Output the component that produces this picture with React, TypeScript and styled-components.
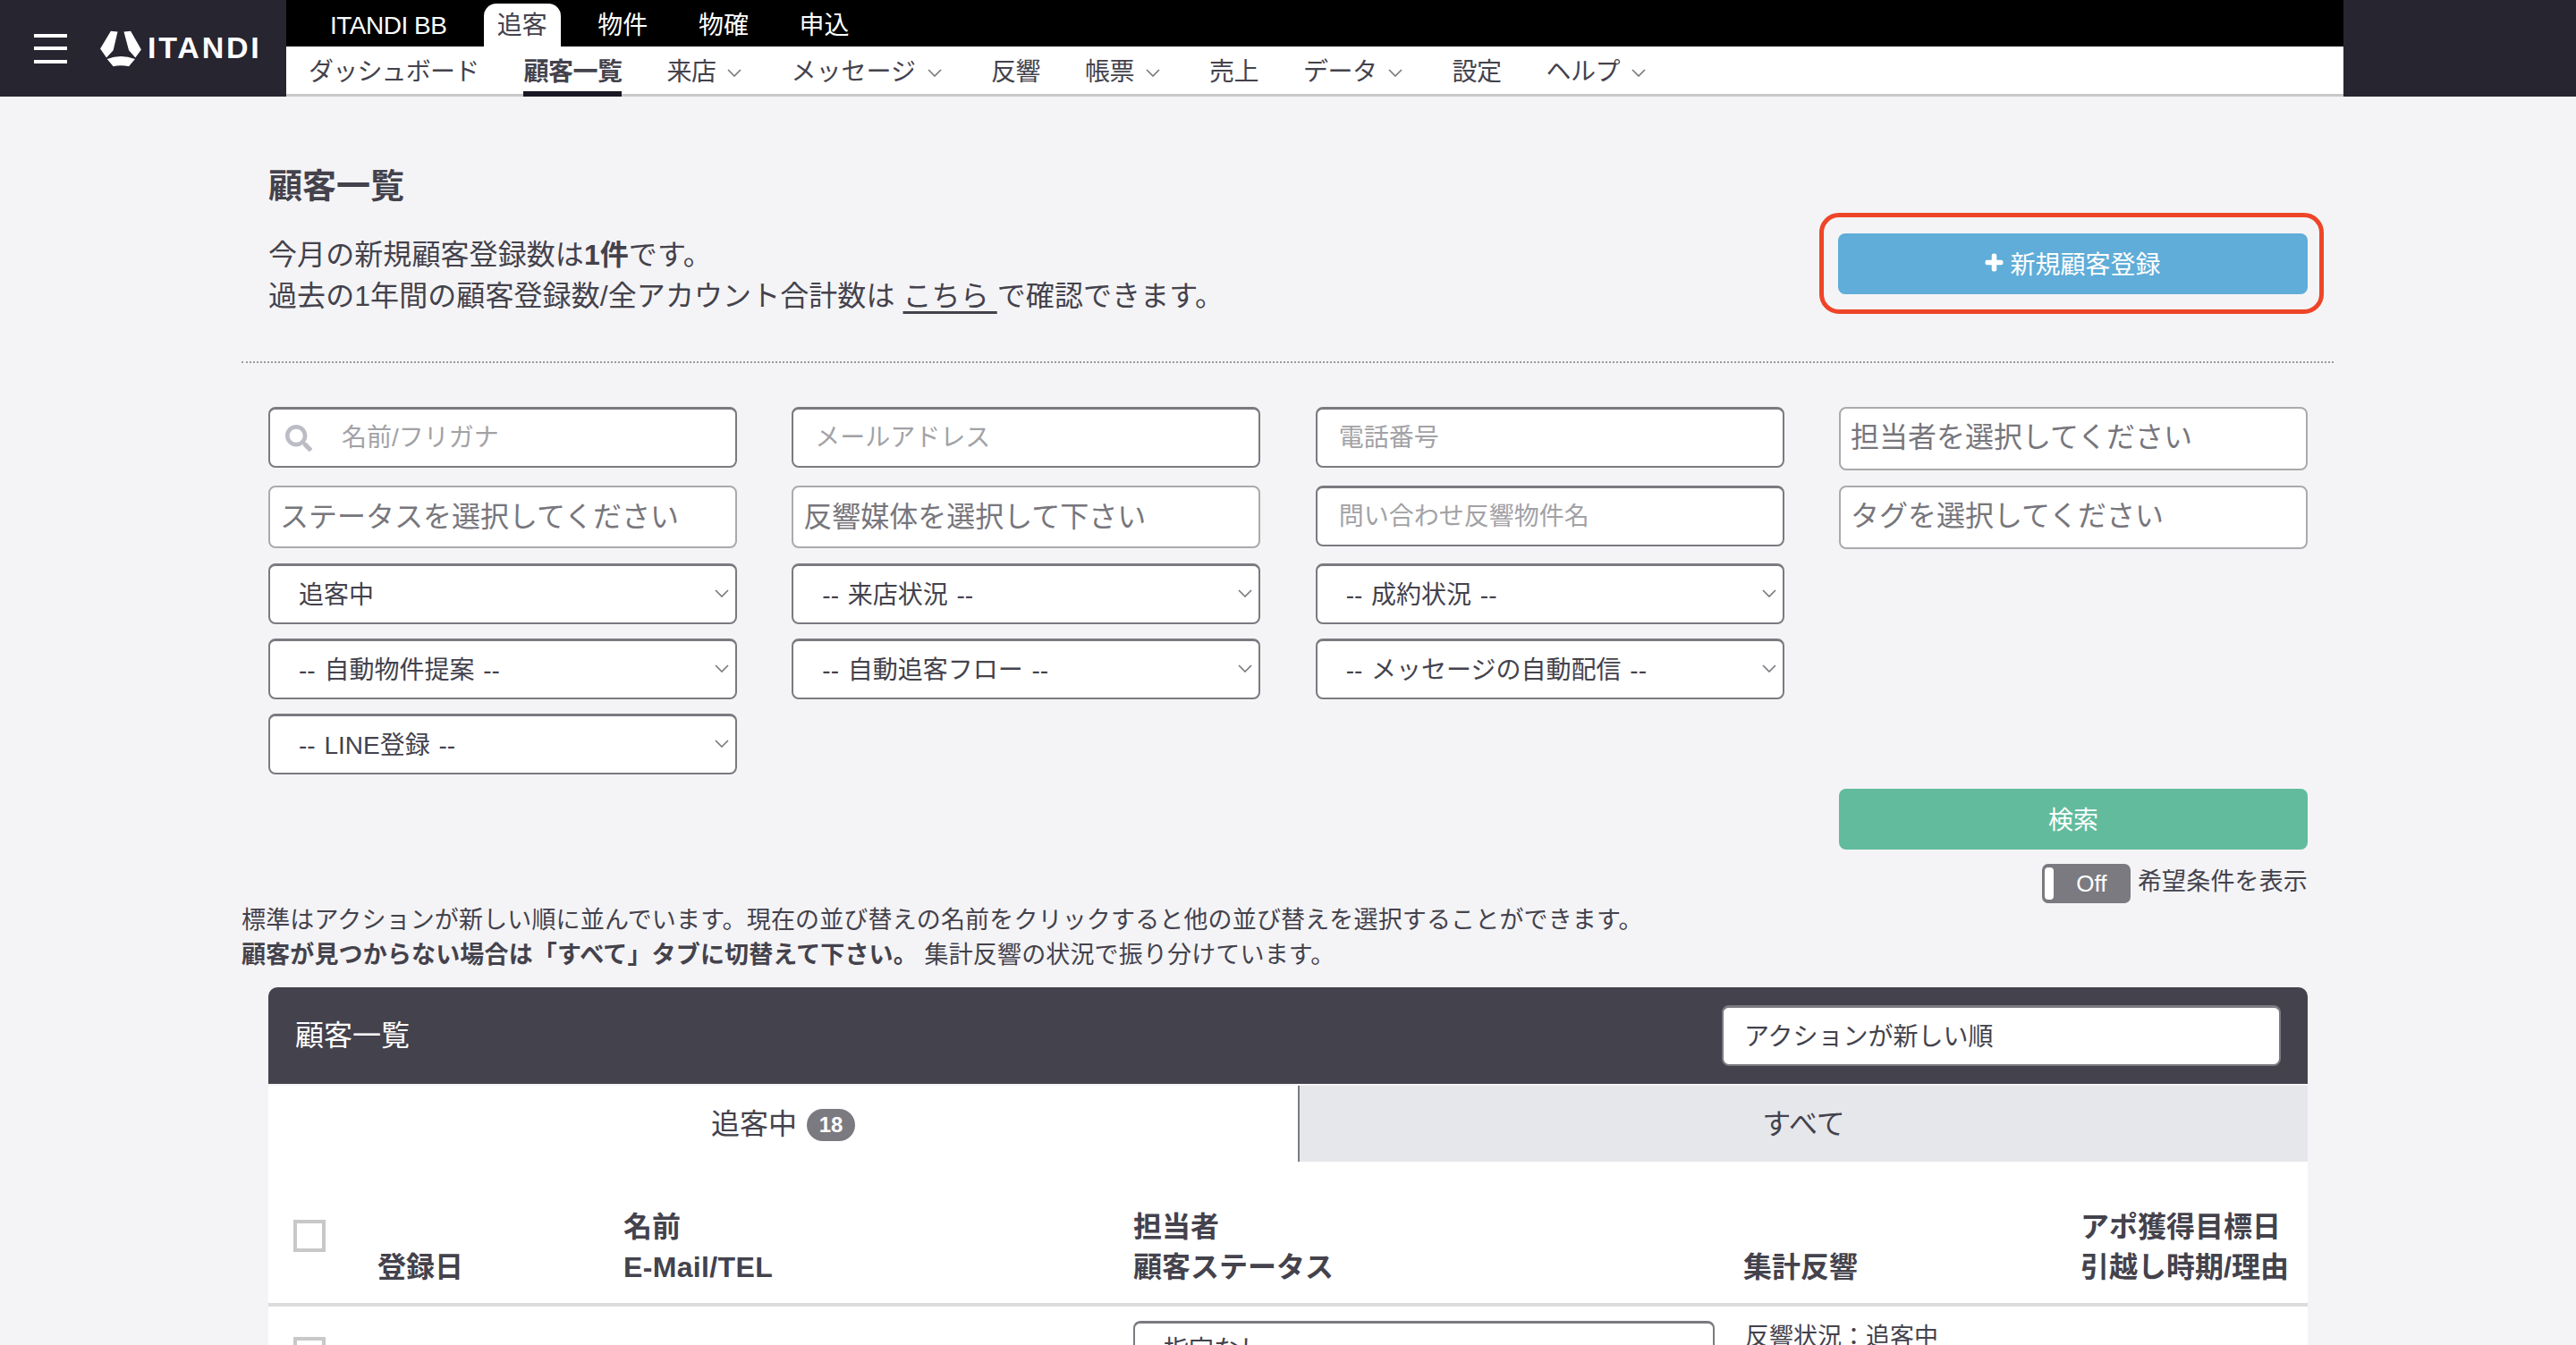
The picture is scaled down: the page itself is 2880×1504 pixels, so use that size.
import React from "react";
import styled, { createGlobalStyle } from "styled-components";
import { FaPlus, FaSearch } from "react-icons/fa";

const GlobalStyle = createGlobalStyle`
  html, body { margin: 0; padding: 0; height: 1504px; overflow: hidden; background: #f4f4f6; }
  body { font-family: "Liberation Sans", "Noto Sans CJK JP", sans-serif; color: #44424c; }
  * { box-sizing: border-box; }
  input, select { font-family: inherit; }
`;

const Page = styled.div`
  width: 2880px;
  height: 1504px;
  overflow: hidden;
`;

/* ---------- header ---------- */
const Header = styled.header`
  display: flex;
  height: 108px;
  background: #262530;
`;
const Brand = styled.div`
  width: 320px;
  flex: none;
  display: flex;
  align-items: center;
  padding-left: 38px;
`;
const Burger = styled.div`
  width: 37px;
  height: 33px;
  display: flex;
  flex-direction: column;
  justify-content: space-between;
  margin-right: 36px;
  span { display: block; height: 4px; background: #fff; }
`;
const LogoMark = styled.svg`
  width: 48px;
  height: 41px;
  flex: none;
  margin-right: 6px;
`;
const LogoText = styled.span`
  color: #fff;
  font-size: 34px;
  font-weight: 700;
  letter-spacing: 2.8px;
  line-height: 1;
  padding-bottom: 3px;
`;
const NavColumn = styled.div`
  width: 2300px;
  flex: none;
  display: flex;
  flex-direction: column;
`;
const TopNav = styled.nav`
  height: 52px;
  background: #000;
  display: flex;
  align-items: flex-end;
  gap: 26.5px;
  padding-left: 34px;
`;
const TopItem = styled.a<{ $active?: boolean }>`
  height: 48px;
  padding: 2px 15px 0;
  display: flex;
  align-items: center;
  font-size: 28px;
  line-height: 1;
  color: ${(p) => (p.$active ? "#44424c" : "#fff")};
  background: ${(p) => (p.$active ? "#fff" : "transparent")};
  border-radius: 14px 14px 0 0;
`;
const BrandTab = styled(TopItem)`
  letter-spacing: -0.5px;
`;
const SubNav = styled.nav`
  height: 56px;
  background: #fff;
  border-bottom: 3px solid #c8c8c8;
  display: flex;
  gap: 50px;
  padding-left: 25px;
`;
const SubItem = styled.a<{ $active?: boolean; $menu?: boolean }>`
  height: 56px;
  display: flex;
  align-items: center;
  font-size: 28px;
  line-height: 1;
  letter-spacing: -0.5px;
  font-weight: ${(p) => (p.$active ? 700 : 400)};
  color: #44424c;
  margin-right: ${(p) => (p.$menu ? "5px" : "0")};
  border-bottom: ${(p) => (p.$active ? "6px solid #1a1824" : "0")};
  padding-top: ${(p) => (p.$active ? "8px" : "2px")};
  svg { margin-left: 13px; }
`;
const DashboardItem = styled(SubItem)`
  letter-spacing: -0.8px;
`;
const MessageItem = styled(SubItem)`
  letter-spacing: 0;
`;

const Chevron = ({ className }: { className?: string }) => (
  <svg className={className} width="16" height="9" viewBox="0 0 16 9" fill="none">
    <path d="M1 1l7 7 7-7" stroke="#77767c" strokeWidth="1.6" />
  </svg>
);

/* ---------- intro ---------- */
const Content = styled.main`
  width: 2339px;
  margin-left: 270px;
`;
const Intro = styled.section`
  display: flex;
  justify-content: space-between;
  align-items: flex-start;
  padding: 77px 11px 50px 30px;
  border-bottom: 2px dotted #9a9a9e;
`;
const Title = styled.h1`
  margin: 0 0 31px;
  font-size: 38px;
  line-height: 46px;
  font-weight: 700;
`;
const Lead = styled.p`
  margin: 0;
  font-size: 32px;
  line-height: 46px;
  letter-spacing: 0.08px;
  a { color: inherit; text-decoration: underline; text-decoration-thickness: 3px; text-underline-offset: 6px; }
`;
const Highlight = styled.div`
  width: 564px;
  height: 113px;
  margin-top: 53px;
  border: 5px solid #ee4528;
  border-radius: 22px;
  display: flex;
  align-items: center;
  justify-content: center;
`;
const AddButton = styled.button`
  width: 525px;
  height: 68px;
  margin-left: 3px;
  border: 0;
  border-radius: 8px;
  background: #5fadd8;
  color: #fff;
  font-family: inherit;
  font-size: 28px;
  display: flex;
  align-items: center;
  justify-content: center;
  gap: 7px;
  padding: 0 0 2px;
  svg { width: 21px; height: 21px; stroke: currentColor; stroke-width: 40px; }
`;

/* ---------- filters ---------- */
const Inset = styled.div`
  margin: 0 29px 0 30px;
`;
const FilterGrid = styled.div`
  display: grid;
  grid-template-columns: repeat(4, 524px);
  column-gap: 61.33px;
  margin-top: 49px;
`;
const FilterColumn = styled.div`
  display: grid;
  grid-template-rows: 88px 87px 84px 84px 68px;
  align-items: start;
`;
const TextInput = styled.input`
  width: 100%;
  height: 68px;
  border: 2px solid #7b7a80;
  border-top-width: 3px;
  border-radius: 8px;
  background: #fff;
  padding: 0 24px;
  font-size: 28px;
  color: #44424c;
  outline: none;
  &::placeholder { color: #a2a2a6; opacity: 1; }
`;
const SearchField = styled.label`
  height: 68px;
  border: 2px solid #7b7a80;
  border-top-width: 3px;
  border-radius: 8px;
  background: #fff;
  display: flex;
  align-items: center;
  padding-left: 17px;
  svg { width: 30px; height: 30px; color: #bcbcc5; flex: none; }
`;
const BareInput = styled.input`
  flex: 1;
  min-width: 0;
  height: 100%;
  border: 0;
  background: transparent;
  padding: 0 0 0 33px;
  font-size: 28px;
  outline: none;
  &::placeholder { color: #a2a2a6; opacity: 1; }
`;
const Picker = styled.div<{ $tall?: boolean }>`
  height: ${(p) => (p.$tall ? "71px" : "70px")};
  border: 2px solid #aaaaac;
  border-radius: 8px;
  background: #fff;
  display: flex;
  align-items: center;
  padding: 0 11px ${(p) => (p.$tall ? "9px" : "6px")};
  font-size: 32px;
  color: #77767c;
`;
const SelectWrap = styled.div`
  position: relative;
  height: 68px;
  svg { position: absolute; right: 9px; top: 29px; pointer-events: none; }
`;
const Select = styled.select`
  width: 100%;
  height: 100%;
  appearance: none;
  border: 2px solid #7b7a80;
  border-top-width: 3px;
  border-radius: 8px;
  background: #fff;
  padding: 2px 30px 0 32px;
  font-size: 28px;
  word-spacing: 2px;
  color: #44424c;
  outline: none;
`;
const SortSelect = styled(Select)`
  padding-left: 23px;
  padding-top: 1px;
`;
const Actions = styled.div`
  display: flex;
  flex-direction: column;
  align-items: flex-end;
  margin-top: 16px;
`;
const SearchButton = styled.button`
  width: 524px;
  height: 68px;
  border: 0;
  border-radius: 8px;
  background: #62bb9c;
  color: #fff;
  font-family: inherit;
  font-size: 28px;
  padding: 0 0 3px;
`;
const ToggleRow = styled.div`
  display: flex;
  align-items: flex-start;
  gap: 8px;
  margin-top: 16px;
  height: 44px;
`;
const Toggle = styled.div`
  width: 99px;
  height: 44px;
  border-radius: 7px;
  background: #7b7a80;
  padding: 4px 3px;
  display: flex;
  align-items: center;
  color: #fff;
  font-size: 26px;
  span:first-child { width: 10px; height: 36px; background: #fff; border-radius: 4px; flex: none; }
  span:last-child { flex: 1; text-align: center; padding-left: 2px; padding-top: 0; }
`;
const ToggleLabel = styled.span`
  font-size: 27px;
  line-height: 40px;
  letter-spacing: 0.15px;
`;
const Notes = styled.div`
  font-size: 27px;
  line-height: 39px;
  letter-spacing: 0.15px;
`;

/* ---------- panel ---------- */
const Panel = styled.section`
  margin-top: 16px;
  background: #fff;
  border-radius: 10px 10px 0 0;
  height: 500px;
`;
const PanelHead = styled.div`
  height: 110px;
  background: #44424c;
  border-bottom: 2px solid #f4f4f6;
  border-radius: 10px 10px 0 0;
  display: flex;
  align-items: center;
  justify-content: space-between;
  padding: 0 30px;
  color: #fff;
  font-size: 32px;
  > span { padding-bottom: 6px; }
  ${SelectWrap} { width: 625px; }
`;
const Tabs = styled.div`
  display: flex;
  height: 85px;
`;
const Tab = styled.div<{ $active?: boolean }>`
  display: flex;
  align-items: center;
  justify-content: center;
  gap: 11px;
  width: ${(p) => (p.$active ? "1151px" : "1129px")};
  font-size: 32px;
  padding-bottom: 6px;
  background: ${(p) => (p.$active ? "#fff" : "#e6e7eb")};
  border-left: ${(p) => (p.$active ? "0" : "2px solid #7b7a80")};
`;
const Badge = styled.span`
  min-width: 54px;
  height: 36px;
  margin-top: 9px;
  border-radius: 18px;
  background: #7b7a80;
  color: #fff;
  font-size: 24px;
  font-weight: 700;
  display: flex;
  align-items: center;
  justify-content: center;
`;
const columns = "122px 275px 570px 682px 377px 254px";
const TableHead = styled.div`
  display: grid;
  grid-template-columns: ${columns};
  align-items: end;
  height: 162px;
  padding-bottom: 17px;
  border-bottom: 4px solid #dcdcdc;
  font-size: 32px;
  font-weight: 700;
  line-height: 45px;
`;
const LatinHead = styled.span`
  letter-spacing: 0.35px;
`;
const Check = styled.span`
  display: block;
  width: 36px;
  height: 36px;
  margin-left: 28px;
  border: 4px solid #c8c8c8;
  background: #fff;
`;
const HeadCheck = styled(Check)`
  margin-bottom: 40px;
`;
const TableRow = styled.div`
  display: grid;
  grid-template-columns: ${columns};
  align-items: start;
  padding-top: 16px;
  font-size: 27px;
  line-height: 36px;
`;
const RowCheck = styled(Check)`
  margin-top: 18px;
`;
const StatusBox = styled.div`
  width: 650px;
  height: 68px;
  border: 2px solid #7b7a80;
  border-top-width: 3px;
  border-radius: 8px;
  padding: 12px 32px;
  font-size: 28px;
  background: #fff;
`;
const Cell = styled.div`
  padding-left: 2px;
`;

const LogoIcon = () => (
  <LogoMark viewBox="34 36 136 118" aria-hidden="true">
    <path fill="#fff" d="M70 38L92 40 78 100 56 124 36 95ZM112 40L134 38 168 98 149 124 128 100ZM58 128Q102 111 148 128L128 152Q102 146 78 152Z" />
  </LogoMark>
);

const PlainSelect = ({ label }: { label: string }) => (
  <SelectWrap>
    <Select defaultValue={label}>
      <option>{label}</option>
    </Select>
    <Chevron />
  </SelectWrap>
);

const SortBox = () => (
  <SelectWrap>
    <SortSelect defaultValue="アクションが新しい順">
      <option>アクションが新しい順</option>
    </SortSelect>
  </SelectWrap>
);

export default function App() {
  return (
    <Page>
      <GlobalStyle />
      <Header>
        <Brand>
          <Burger><span /><span /><span /></Burger>
          <LogoIcon />
          <LogoText>ITANDI</LogoText>
        </Brand>
        <NavColumn>
          <TopNav>
            <BrandTab>ITANDI BB</BrandTab>
            <TopItem $active>追客</TopItem>
            <TopItem>物件</TopItem>
            <TopItem>物確</TopItem>
            <TopItem>申込</TopItem>
          </TopNav>
          <SubNav>
            <DashboardItem>ダッシュボード</DashboardItem>
            <SubItem $active>顧客一覧</SubItem>
            <SubItem $menu>来店<Chevron /></SubItem>
            <MessageItem $menu>メッセージ<Chevron /></MessageItem>
            <SubItem>反響</SubItem>
            <SubItem $menu>帳票<Chevron /></SubItem>
            <SubItem>売上</SubItem>
            <SubItem $menu>データ<Chevron /></SubItem>
            <SubItem>設定</SubItem>
            <SubItem $menu>ヘルプ<Chevron /></SubItem>
          </SubNav>
        </NavColumn>
      </Header>

      <Content>
        <Intro>
          <div>
            <Title>顧客一覧</Title>
            <Lead>今月の新規顧客登録数は<b>1件</b>です。</Lead>
            <Lead>過去の1年間の顧客登録数/全アカウント合計数は <a>こちら </a>で確認できます。</Lead>
          </div>
          <Highlight>
            <AddButton><FaPlus />新規顧客登録</AddButton>
          </Highlight>
        </Intro>

        <Inset>
          <FilterGrid>
            <FilterColumn>
              <SearchField>
                <FaSearch />
                <BareInput placeholder="名前/フリガナ" />
              </SearchField>
              <Picker>ステータスを選択してください</Picker>
              <PlainSelect label="追客中" />
              <PlainSelect label="-- 自動物件提案 --" />
              <PlainSelect label="-- LINE登録 --" />
            </FilterColumn>
            <FilterColumn>
              <TextInput placeholder="メールアドレス" />
              <Picker>反響媒体を選択して下さい</Picker>
              <PlainSelect label="-- 来店状況 --" />
              <PlainSelect label="-- 自動追客フロー --" />
            </FilterColumn>
            <FilterColumn>
              <TextInput placeholder="電話番号" />
              <TextInput placeholder="問い合わせ反響物件名" />
              <PlainSelect label="-- 成約状況 --" />
              <PlainSelect label="-- メッセージの自動配信 --" />
            </FilterColumn>
            <FilterColumn>
              <Picker $tall>担当者を選択してください</Picker>
              <Picker $tall>タグを選択してください</Picker>
            </FilterColumn>
          </FilterGrid>
          <Actions>
            <SearchButton>検索</SearchButton>
            <ToggleRow>
              <Toggle><span /><span>Off</span></Toggle>
              <ToggleLabel>希望条件を表示</ToggleLabel>
            </ToggleRow>
          </Actions>
        </Inset>

        <Notes>
          <div>標準はアクションが新しい順に並んでいます。現在の並び替えの名前をクリックすると他の並び替えを選択することができます。</div>
          <div><b>顧客が見つからない場合は「すべて」タブに切替えて下さい。</b> 集計反響の状況で振り分けています。</div>
        </Notes>

        <Inset>
          <Panel>
            <PanelHead>
              <span>顧客一覧</span>
              <SortBox />
            </PanelHead>
            <Tabs>
              <Tab $active>追客中<Badge>18</Badge></Tab>
              <Tab>すべて</Tab>
            </Tabs>
            <TableHead>
              <HeadCheck />
              <div>登録日</div>
              <div>名前<br /><LatinHead>E-Mail/TEL</LatinHead></div>
              <div>担当者<br />顧客ステータス</div>
              <div>集計反響</div>
              <div>アポ獲得目標日<br />引越し時期/理由</div>
            </TableHead>
            <TableRow>
              <RowCheck />
              <div />
              <div />
              <StatusBox>指定なし</StatusBox>
              <Cell>反響状況：追客中</Cell>
              <div />
            </TableRow>
          </Panel>
        </Inset>
      </Content>
    </Page>
  );
}
